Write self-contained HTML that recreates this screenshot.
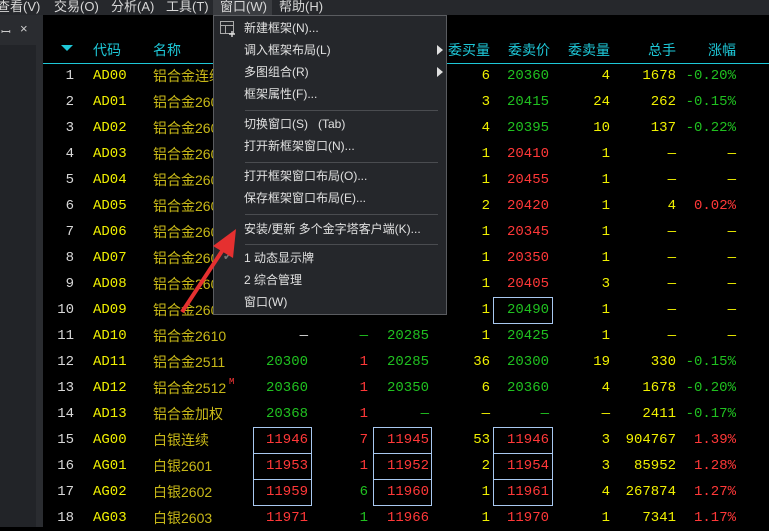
<!DOCTYPE html>
<html><head><meta charset="utf-8"><style>
*{margin:0;padding:0;box-sizing:border-box}
body{width:769px;height:527px;background:#000;overflow:hidden;position:relative;font-family:"Liberation Sans","Noto Sans CJK SC",sans-serif}
#mb{position:absolute;left:0;top:0;width:769px;height:15px;background:#26282c;color:#d8d8d8;font-size:13px;line-height:13px}
#mb span{position:absolute;top:0}
#lp{position:absolute;left:0;top:15px;width:36px;height:512px;background:#222428}
#lph{position:absolute;left:0;top:15px;width:43px;height:30px;background:#2a2c30;color:#ccc;font-size:13px}
#gap{position:absolute;left:36px;top:15px;width:7px;height:512px;background:#2a2c30}
#tb{position:absolute;left:43px;top:20px;width:726px;height:507px;background:#000}
.hd{position:absolute;top:40px;color:#1ec8d8;font-size:14px;line-height:20px}
#line{position:absolute;left:43px;top:63px;width:726px;height:1px;background:#1ec8d8}
.r{position:absolute;left:0;width:769px;height:26px;line-height:26px;font-family:"Liberation Mono","Noto Sans CJK SC",monospace;font-size:14px}
.r span{position:absolute;top:0;white-space:nowrap}
.n{left:44px;width:30px;text-align:right;color:#d8d8d8}
.c{left:93px;color:#f0f000}
.m{left:153px;color:#c8b818;font-family:"Liberation Sans","Noto Sans CJK SC",sans-serif}
.a{left:248px;width:60px;text-align:right}
.b{left:330px;width:38px;text-align:right}
.d{left:369px;width:60px;text-align:right}
.e{left:450px;width:40px;text-align:right;color:#f0f000}
.f{left:489px;width:60px;text-align:right}
.g{left:570px;width:40px;text-align:right;color:#f0f000}
.h{left:606px;width:70px;text-align:right;color:#f0f000}
.k{left:670px;width:66px;text-align:right}
.G{color:#20c020}.R{color:#ff3838}.Y{color:#f0f000}
.bx{position:absolute;height:27px;border:1px solid #a8c8f0}
#menu{position:absolute;left:213px;top:15px;width:234px;height:300px;background:#25272b;border:1px solid #5a5c60;color:#e0e0e0;font-size:12px}
#menu div.i{position:absolute;left:30px;line-height:16px}
#menu div.s{position:absolute;left:31px;width:193px;height:1px;background:#4a4c50}
.tri{position:absolute;right:3px;width:0;height:0;border-top:5px solid transparent;border-bottom:5px solid transparent;border-left:6px solid #e0e0e0}
</style></head><body>
<div id="mb">
<span style="left:-3px">查看(V)</span><span style="left:54px">交易(O)</span><span style="left:111px">分析(A)</span><span style="left:166px">工具(T)</span>
<span style="left:213px;width:59px;height:15px;background:#3a3c40;padding-left:7px">窗口(W)</span><span style="left:279px">帮助(H)</span>
</div>
<div id="lp"></div><div id="gap"></div>
<div id="lph"><span style="position:absolute;left:1px;top:8px;font-size:12px">ꟷ</span><span style="position:absolute;left:20px;top:6px">×</span></div>
<div id="tb"></div>
<div style="position:absolute;left:61px;top:45px;width:0;height:0;border-left:6px solid transparent;border-right:6px solid transparent;border-top:6px solid #1ec8d8"></div>
<div class="hd" style="left:93px">代码</div><div class="hd" style="left:153px">名称</div>
<div class="hd" style="left:448px">委买量</div><div class="hd" style="left:508px">委卖价</div><div class="hd" style="left:568px">委卖量</div><div class="hd" style="left:648px">总手</div><div class="hd" style="left:708px">涨幅</div>
<div id="line"></div>

<div class="r" style="top:63px"><span class="n">1</span><span class="c">AD00</span><span class="m">铝合金连续</span><span class="e">6</span><span class="f G">20360</span><span class="g">4</span><span class="h">1678</span><span class="k G">-0.20%</span></div>
<div class="r" style="top:89px"><span class="n">2</span><span class="c">AD01</span><span class="m">铝合金2601</span><span class="e">3</span><span class="f G">20415</span><span class="g">24</span><span class="h">262</span><span class="k G">-0.15%</span></div>
<div class="r" style="top:115px"><span class="n">3</span><span class="c">AD02</span><span class="m">铝合金2602</span><span class="e">4</span><span class="f G">20395</span><span class="g">10</span><span class="h">137</span><span class="k G">-0.22%</span></div>
<div class="r" style="top:141px"><span class="n">4</span><span class="c">AD03</span><span class="m">铝合金2603</span><span class="e">1</span><span class="f R">20410</span><span class="g">1</span><span class="h">—</span><span class="k Y">—</span></div>
<div class="r" style="top:167px"><span class="n">5</span><span class="c">AD04</span><span class="m">铝合金2604</span><span class="e">1</span><span class="f R">20455</span><span class="g">1</span><span class="h">—</span><span class="k Y">—</span></div>
<div class="r" style="top:193px"><span class="n">6</span><span class="c">AD05</span><span class="m">铝合金2605</span><span class="e">2</span><span class="f R">20420</span><span class="g">1</span><span class="h">4</span><span class="k R">0.02%</span></div>
<div class="r" style="top:219px"><span class="n">7</span><span class="c">AD06</span><span class="m">铝合金2606</span><span class="e">1</span><span class="f R">20345</span><span class="g">1</span><span class="h">—</span><span class="k Y">—</span></div>
<div class="r" style="top:245px"><span class="n">8</span><span class="c">AD07</span><span class="m">铝合金2607</span><span class="e">1</span><span class="f R">20350</span><span class="g">1</span><span class="h">—</span><span class="k Y">—</span></div>
<div class="r" style="top:271px"><span class="n">9</span><span class="c">AD08</span><span class="m">铝合金2608</span><span class="e">1</span><span class="f R">20405</span><span class="g">3</span><span class="h">—</span><span class="k Y">—</span></div>
<div class="r" style="top:297px"><span class="n">10</span><span class="c">AD09</span><span class="m">铝合金2609</span><span class="e">1</span><span class="f G">20490</span><span class="g">1</span><span class="h">—</span><span class="k Y">—</span></div>
<div class="r" style="top:323px"><span class="n">11</span><span class="c">AD10</span><span class="m">铝合金2610</span><span class="a Y" style="color:#d8d8d8">—</span><span class="b G">—</span><span class="d G">20285</span><span class="e">1</span><span class="f G">20425</span><span class="g">1</span><span class="h">—</span><span class="k Y">—</span></div>
<div class="r" style="top:349px"><span class="n">12</span><span class="c">AD11</span><span class="m">铝合金2511</span><span class="a G">20300</span><span class="b R">1</span><span class="d G">20285</span><span class="e">36</span><span class="f G">20300</span><span class="g">19</span><span class="h">330</span><span class="k G">-0.15%</span></div>
<div class="r" style="top:375px"><span class="n">13</span><span class="c">AD12</span><span class="m">铝合金2512</span><span class="R" style="left:229px;top:-6px;font-size:9px">M</span><span class="a G">20360</span><span class="b R">1</span><span class="d G">20350</span><span class="e">6</span><span class="f G">20360</span><span class="g">4</span><span class="h">1678</span><span class="k G">-0.20%</span></div>
<div class="r" style="top:401px"><span class="n">14</span><span class="c">AD13</span><span class="m">铝合金加权</span><span class="a G">20368</span><span class="b R">1</span><span class="d G">—</span><span class="e">—</span><span class="f G">—</span><span class="g">—</span><span class="h">2411</span><span class="k G">-0.17%</span></div>
<div class="r" style="top:427px"><span class="n">15</span><span class="c">AG00</span><span class="m">白银连续</span><span class="a R">11946</span><span class="b R">7</span><span class="d R">11945</span><span class="e">53</span><span class="f R">11946</span><span class="g">3</span><span class="h">904767</span><span class="k R">1.39%</span></div>
<div class="r" style="top:453px"><span class="n">16</span><span class="c">AG01</span><span class="m">白银2601</span><span class="a R">11953</span><span class="b R">1</span><span class="d R">11952</span><span class="e">2</span><span class="f R">11954</span><span class="g">3</span><span class="h">85952</span><span class="k R">1.28%</span></div>
<div class="r" style="top:479px"><span class="n">17</span><span class="c">AG02</span><span class="m">白银2602</span><span class="a R">11959</span><span class="b G">6</span><span class="d R">11960</span><span class="e">1</span><span class="f R">11961</span><span class="g">4</span><span class="h">267874</span><span class="k R">1.27%</span></div>
<div class="r" style="top:505px"><span class="n">18</span><span class="c">AG03</span><span class="m">白银2603</span><span class="a R">11971</span><span class="b G">1</span><span class="d R">11966</span><span class="e">1</span><span class="f R">11970</span><span class="g">1</span><span class="h">7341</span><span class="k R">1.17%</span></div>

<div class="bx" style="left:493px;top:297px;width:60px"></div>
<div class="bx" style="left:253px;top:427px;width:59px"></div><div class="bx" style="left:373px;top:427px;width:59px"></div><div class="bx" style="left:493px;top:427px;width:60px"></div>
<div class="bx" style="left:253px;top:453px;width:59px"></div><div class="bx" style="left:373px;top:453px;width:59px"></div><div class="bx" style="left:493px;top:453px;width:60px"></div>
<div class="bx" style="left:253px;top:479px;width:59px"></div><div class="bx" style="left:373px;top:479px;width:59px"></div><div class="bx" style="left:493px;top:479px;width:60px"></div>

<div id="menu">
<svg style="position:absolute;left:5px;top:4px" width="18" height="18" viewBox="0 0 18 18"><rect x="1.5" y="1.5" width="13" height="12" fill="none" stroke="#aaa"/><line x1="1.5" y1="5.5" x2="14.5" y2="5.5" stroke="#aaa"/><line x1="6.5" y1="5.5" x2="6.5" y2="13.5" stroke="#aaa"/><path d="M13 11v6M10 14h6" stroke="#ddd" stroke-width="1.4"/></svg>
<div class="i" style="top:4px">新建框架(N)...</div>
<div class="i" style="top:26px">调入框架布局(L)</div><div class="tri" style="top:29px"></div>
<div class="i" style="top:48px">多图组合(R)</div><div class="tri" style="top:51px"></div>
<div class="i" style="top:70px">框架属性(F)...</div>
<div class="s" style="top:94px"></div>
<div class="i" style="top:100px">切换窗口(S)&nbsp;&nbsp;&nbsp;(Tab)</div>
<div class="i" style="top:122px">打开新框架窗口(N)...</div>
<div class="s" style="top:146px"></div>
<div class="i" style="top:152px">打开框架窗口布局(O)...</div>
<div class="i" style="top:174px">保存框架窗口布局(E)...</div>
<div class="s" style="top:198px"></div>
<div class="i" style="top:205px">安装/更新 多个金字塔客户端(K)...</div>
<div class="s" style="top:228px"></div>
<div style="position:absolute;left:9px;top:234px;color:#777;font-size:11px">✔</div>
<div class="i" style="top:234px">1 动态显示牌</div>
<div class="i" style="top:256px">2 综合管理</div>
<div class="i" style="top:278px">窗口(W)</div>
</div>
<svg style="position:absolute;left:0;top:0" width="769" height="527"><line x1="182" y1="312" x2="226" y2="245" stroke="#e53030" stroke-width="4"/><polygon points="236,229 233,258 213,246" fill="#e53030"/></svg>
</body></html>
